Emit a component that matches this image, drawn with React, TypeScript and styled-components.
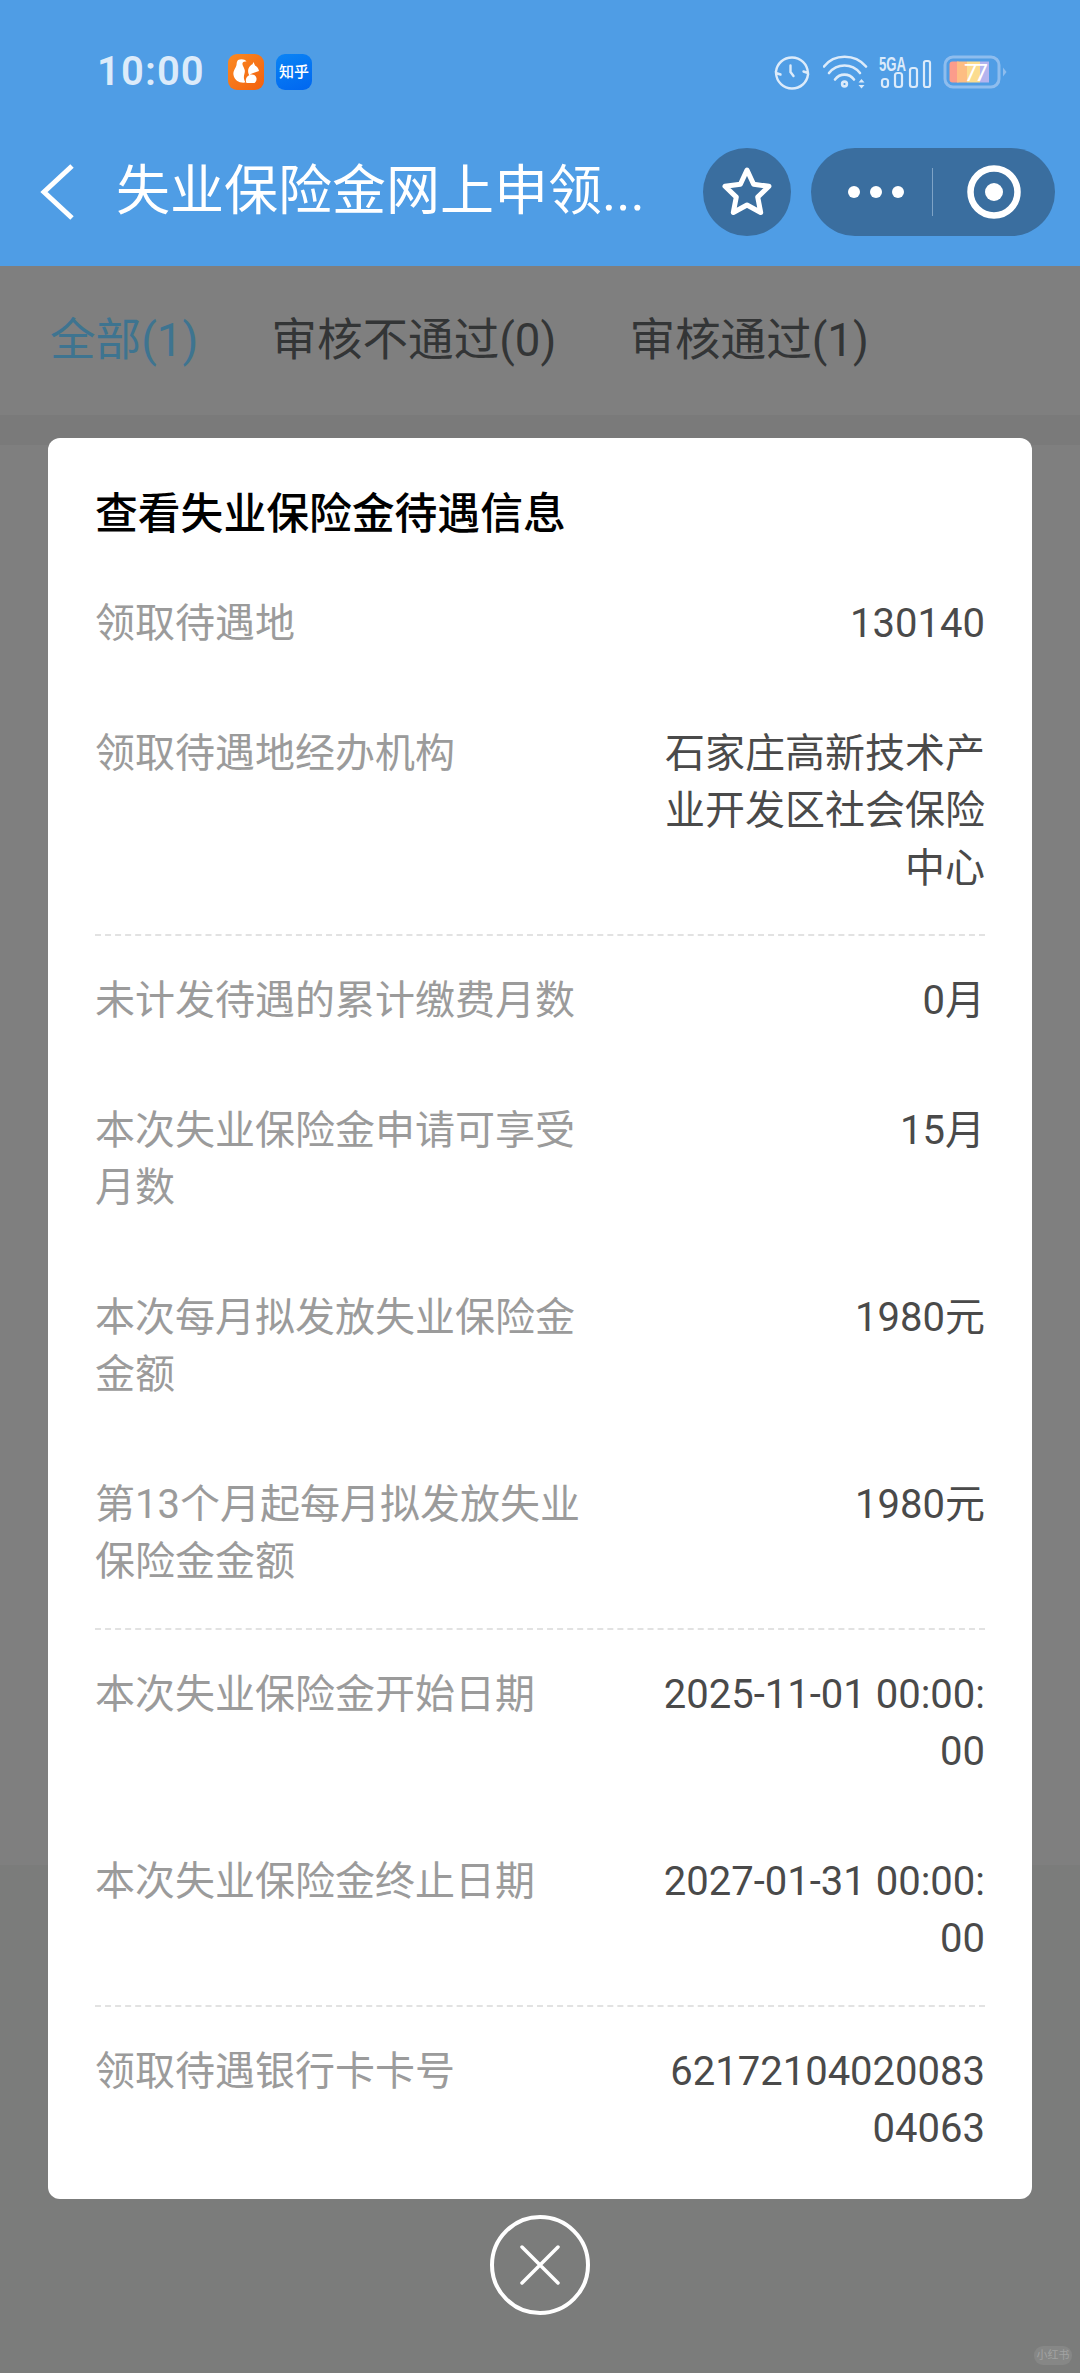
import React from "react";
import styled, { createGlobalStyle } from "styled-components";

const GlobalStyle = createGlobalStyle`
  html, body {
    margin: 0;
    padding: 0;
    background: #7d7e7d;
  }
  * {
    box-sizing: border-box;
  }
`;

//#region Page behind the dialog
const Page = styled.div`
  position: relative;
  width: 1080px;
  height: 2373px;
  overflow: hidden;
  display: flex;
  flex-direction: column;
  font-family: Roboto, "Noto Sans CJK SC", sans-serif;
`;

const Header = styled.header`
  height: 266px;
  flex: none;
  background: #4f9de5;
`;

const StatusBar = styled.div`
  height: 148px;
  padding: 54px 73px 0 97px;
  display: flex;
  align-items: flex-start;
  justify-content: space-between;
`;

const StatusLeft = styled.div`
  display: flex;
  align-items: center;
  height: 36px;
`;

const Clock = styled.span`
  width: 131px;
  font-size: 40px;
  line-height: 36px;
  font-weight: 600;
  letter-spacing: 1.1px;
  color: #dcebfa;
`;

const AppBadge = styled.span<{ $bg: string }>`
  width: 36px;
  height: 36px;
  margin-right: 12px;
  border-radius: 9px;
  background: ${(p) => p.$bg};
  display: flex;
  align-items: center;
  justify-content: center;
  color: #fff;
  font-size: 15px;
  line-height: 16px;
  font-weight: 500;
  white-space: nowrap;
  overflow: hidden;
`;

const StatusRight = styled.div`
  display: flex;
  align-items: flex-start;
  gap: 9px;

  svg:first-child {
    margin-right: 4px;
  }
`;

const NavBar = styled.div`
  height: 88px;
  padding: 0 25px 0 40px;
  display: flex;
  align-items: center;
`;

const BackButton = styled.span`
  width: 76px;
  height: 88px;
  flex: none;
  display: flex;
  align-items: center;
`;

const NavTitle = styled.h1`
  margin: 0;
  flex: 1;
  font-size: 54px;
  line-height: 88px;
  font-weight: 400;
  color: #fff;
  white-space: nowrap;
`;

const RoundButton = styled.span`
  width: 88px;
  height: 88px;
  flex: none;
  margin-right: 20px;
  border-radius: 50%;
  background: #3a6e9f;
  display: flex;
  align-items: center;
  justify-content: center;
`;

const Capsule = styled.div`
  width: 244px;
  height: 88px;
  flex: none;
  border-radius: 44px;
  background: #3a6e9f;
  display: flex;
  align-items: center;
`;

const MoreDots = styled.span`
  width: 121px;
  display: flex;
  justify-content: center;
  gap: 10px;
  padding-left: 8px;
`;

const Dot = styled.i`
  width: 12px;
  height: 12px;
  border-radius: 50%;
  background: #fff;
`;

const CapsuleDivider = styled.span`
  width: 1px;
  height: 48px;
  background: #7ea3c6;
`;

const TargetWrap = styled.span`
  flex: 1;
  display: flex;
  justify-content: center;
`;

const Tabs = styled.nav`
  height: 149px;
  flex: none;
  padding-left: 50px;
  display: flex;
  align-items: center;
  gap: 73px;
  background: #7f7f7f;
`;

const Tab = styled.span<{ $active?: boolean }>`
  font-size: 45.6px;
  line-height: 148px;
  color: ${(p) => (p.$active ? "#3e7490" : "#333536")};
`;

const Band = styled.div<{ $height: number; $bg: string }>`
  height: ${(p) => p.$height}px;
  flex: none;
  background: ${(p) => p.$bg};
`;
//#endregion

//#region Dialog
const Overlay = styled.div`
  position: absolute;
  inset: 0;
  padding: 438px 48px 0;
  display: flex;
  flex-direction: column;
  align-items: center;
`;

const Dialog = styled.section`
  width: 984px;
  height: 1761px;
  padding: 46px 47px 0;
  border-radius: 12px;
  background: #fff;
`;

const DialogTitle = styled.h2`
  margin: 0 0 15px;
  font-size: 42.8px;
  line-height: 60px;
  font-weight: 500;
  color: #000;
`;

const Group = styled.div<{ $divided?: boolean }>`
  border-bottom: ${(p) => (p.$divided ? "2px dashed #e2e2e2" : "none")};
  padding-bottom: ${(p) => (p.$divided ? "1px" : "0")};
`;

const Row = styled.div`
  padding: 36px 0;
  display: flex;
  justify-content: space-between;
  font-size: 40px;
  line-height: 57.5px;
`;

const Label = styled.div`
  width: 490px;
  color: #9b9b9b;
`;

const Value = styled.div`
  width: 332px;
  text-align: right;
  word-break: break-all;
  color: #4a4a4a;
`;

const CloseButton = styled.span`
  margin-top: 16px;
  width: 100px;
  height: 100px;
  border: 4px solid #fff;
  border-radius: 50%;
  display: flex;
  align-items: center;
  justify-content: center;
`;

const Watermark = styled.span`
  position: absolute;
  right: 8px;
  bottom: 8px;
  width: 38px;
  height: 19px;
  border-radius: 9px;
  background: #868786;
  color: #a2a3a2;
  font-size: 11px;
  line-height: 19px;
  text-align: center;
  white-space: nowrap;
`;
//#endregion

const groups = [
  {
    divided: true,
    rows: [
      ["领取待遇地", "130140"],
      ["领取待遇地经办机构", "石家庄高新技术产业开发区社会保险中心"],
    ],
  },
  {
    divided: true,
    rows: [
      ["未计发待遇的累计缴费月数", "0月"],
      ["本次失业保险金申请可享受月数", "15月"],
      ["本次每月拟发放失业保险金金额", "1980元"],
      ["第13个月起每月拟发放失业保险金金额", "1980元"],
    ],
  },
  {
    divided: true,
    rows: [
      ["本次失业保险金开始日期", "2025-11-01 00:00:00"],
      ["本次失业保险金终止日期", "2027-01-31 00:00:00"],
    ],
  },
  {
    divided: false,
    rows: [["领取待遇银行卡卡号", "6217210402008304063"]],
  },
];

const UcIcon = () => (
  <svg width="36" height="36" viewBox="0 0 36 36" fill="#fff">
    {/* tail */}
    <path d="M10 6c3-1.500 7-1 8.500 1.500-2.500-.5-4.500.5-4 3 .6 3 3.500 5 2 9-1 2.800-1 6 1 9-6 .8-11-2-12-7.500-.8-4.500 2.500-7 3-10 .3-2 .2-3.500 1.500-5z" />
    {/* head */}
    <path d="M25.500 8l1.500 3.500c2.200 1 3.600 3 4 5.500l-5 1.800c-2 .4-3.500 1.400-4.500 2.700-1.300-1.800-1.900-4.300-1-7 .8-2.400 2.800-3.800 4-4.300z" />
    {/* body */}
    <path d="M18.500 29c-1.500-3-.5-6.500 3-8 3.200-1.400 6.500.3 7 3.200.3 2-.6 3.800-2 4.800z" />
  </svg>
);

const ClockIcon = () => (
  <svg width="36" height="36" viewBox="0 -2 36 36" fill="none" stroke="#dcebfa" strokeWidth="2.4" strokeLinecap="round">
    <path d="M2 15.500C3 7.500 9.500 1.500 18 1.500s15.500 6.500 16 15.500l-4.500-1.500" />
    <path d="M34 18.500C33 26.500 26.500 32.500 18 32.500S2.500 26 2 17l4.500 1.500" />
    <path d="M16.500 9.500v6.500l3 4" />
  </svg>
);

const WifiIcon = () => (
  <svg width="46" height="36" viewBox="0 0 46 36" fill="none" stroke="#dcebfa" strokeWidth="2.6" strokeLinecap="round">
    <path d="M1 12.500C11 -0.500 32 -0.500 43 12.500" />
    <path d="M6 19C14 9 29 9 37 19" />
    <path d="M12 25.500C17 19 26 19 31 25.500" />
    <circle cx="21.500" cy="30" r="2.400" />
    <path d="M35.500 28.500l3-3.500 3 3.500zM35.500 31l3 3.500 3-3.500z" fill="#dcebfa" stroke="none" />
  </svg>
);

const SignalIcon = () => (
  <svg width="56" height="36" viewBox="0 0 56 36" fill="none" stroke="#dcebfa" strokeWidth="2.2">
    <text
      x="1"
      y="17"
      fontFamily="'Liberation Sans', sans-serif"
      fontSize="20"
      fontWeight="700"
      fill="#dcebfa"
      stroke="none"
      textLength="27"
      lengthAdjust="spacingAndGlyphs"
    >
      5GA
    </text>
    <rect x="4" y="25" width="6" height="8" rx="2.500" />
    <rect x="17" y="19" width="7" height="14" rx="2.500" />
    <rect x="32" y="14" width="7" height="19" rx="2.500" />
    <rect x="46" y="7" width="6" height="26" rx="2" />
  </svg>
);

const BatteryIcon = () => (
  <svg width="64" height="36" viewBox="0 0 64 36">
    <rect x="2" y="3" width="54" height="30" rx="8" fill="none" stroke="#8ebdee" strokeWidth="3" />
    <rect x="6.500" y="7.500" width="11" height="21" rx="3" fill="#fb9c8b" />
    <rect x="14" y="7.500" width="10" height="21" fill="#fdbd83" />
    <rect x="24" y="7.500" width="13" height="21" fill="#fbdc8f" />
    <rect x="37" y="7.500" width="9" height="21" fill="#b4b4ee" />
    <text x="21" y="27" fontFamily="Roboto, sans-serif" fontSize="24" fill="#fff" textLength="24">
      77
    </text>
    <path d="M60 13.500l3.500 4.500-3.500 4.500z" fill="#8ebdee" />
  </svg>
);

export default function App() {
  return (
    <Page>
      <GlobalStyle />
      <Header>
        <StatusBar>
          <StatusLeft>
            <Clock>10:00</Clock>
            <AppBadge $bg="linear-gradient(135deg, #fb8a22, #f2600f)">
              <UcIcon />
            </AppBadge>
            <AppBadge $bg="linear-gradient(160deg, #0a84f5, #0066f0)">知乎</AppBadge>
          </StatusLeft>
          <StatusRight>
            <ClockIcon />
            <WifiIcon />
            <SignalIcon />
            <BatteryIcon />
          </StatusRight>
        </StatusBar>
        <NavBar>
          <BackButton>
            <svg width="34" height="56" viewBox="0 0 34 56" fill="none" stroke="#fff" strokeWidth="5">
              <path d="M32 2L4 28l28 26" />
            </svg>
          </BackButton>
          <NavTitle>失业保险金网上申领...</NavTitle>
          <RoundButton>
            <svg width="52" height="52" viewBox="0 0 52 52" fill="none" stroke="#fff" strokeWidth="5" strokeLinejoin="round">
              <path d="M26 4l6.600 14.300 15.400 2-11.300 10.800 3 15.400L26 39l-13.700 7.500 3-15.400L4 20.300l15.400-2z" />
            </svg>
          </RoundButton>
          <Capsule>
            <MoreDots>
              <Dot />
              <Dot />
              <Dot />
            </MoreDots>
            <CapsuleDivider />
            <TargetWrap>
              <svg width="56" height="56" viewBox="0 0 56 56">
                <circle cx="28" cy="28" r="23.500" fill="none" stroke="#fff" strokeWidth="6.500" />
                <circle cx="28" cy="28" r="9" fill="#fff" />
              </svg>
            </TargetWrap>
          </Capsule>
        </NavBar>
      </Header>

      <Tabs>
        <Tab $active>全部(1)</Tab>
        <Tab>审核不通过(0)</Tab>
        <Tab>审核通过(1)</Tab>
      </Tabs>
      <Band $height={30} $bg="#7a7a7a" />
      <Band $height={1420} $bg="#7f7f7f" />
      <Band $height={508} $bg="#7b7c7b" />

      <Overlay>
        <Dialog>
          <DialogTitle>查看失业保险金待遇信息</DialogTitle>
          {groups.map((group, i) => (
            <Group key={i} $divided={group.divided}>
              {group.rows.map(([label, value]) => (
                <Row key={label}>
                  <Label>{label}</Label>
                  <Value>{value}</Value>
                </Row>
              ))}
            </Group>
          ))}
        </Dialog>
        <CloseButton>
          <svg width="40" height="40" viewBox="0 0 40 40" stroke="#fff" strokeWidth="3.500" strokeLinecap="round">
            <path d="M2 2l36 36M38 2L2 38" />
          </svg>
        </CloseButton>
      </Overlay>
      <Watermark>小红书</Watermark>
    </Page>
  );
}
